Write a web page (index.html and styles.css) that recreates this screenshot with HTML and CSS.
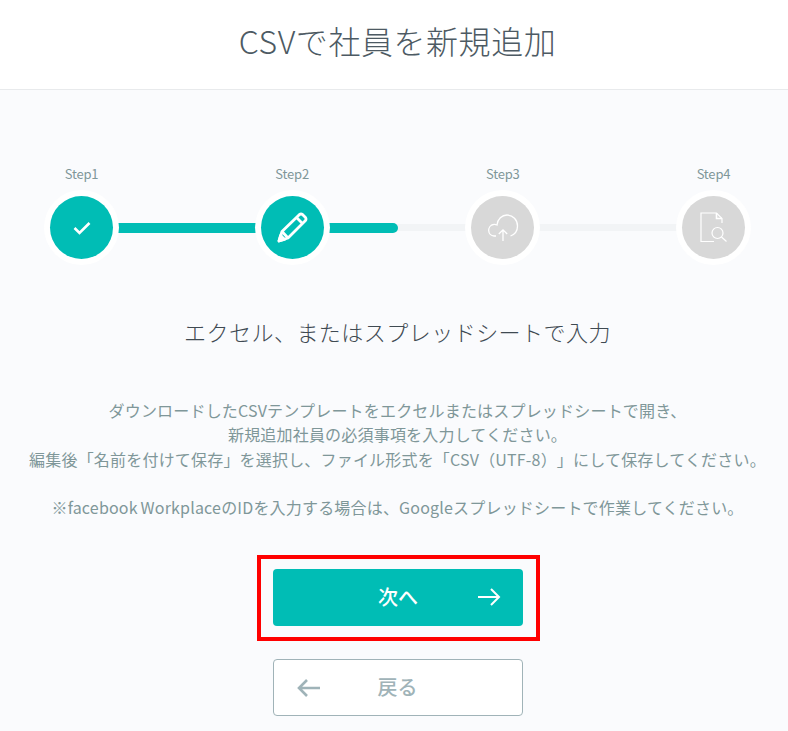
FILE: index.html
```html
<!DOCTYPE html>
<html lang="ja">
<head>
    <meta charset="UTF-8">
    <meta name="viewport" content="width=device-width, initial-scale=1.0">
    <title>CSVで社員を新規追加</title>
    <link rel="stylesheet" href="styles.css">
</head>
<body>
<header class="header">
    <h1>CSVで社員を新規追加</h1>
</header>
<main class="content">

    <div class="stepper">
        <div class="track"><div class="track-done"></div></div>

        <div class="step">
            <div class="step-label">Step1</div>
            <div class="step-ring"><div class="step-circle active">
                <svg width="18" height="14" viewBox="0 0 18 14" fill="none" stroke="#fff" stroke-width="2.6"><path d="M1.5 7 L6.5 12 L16.5 2"/></svg>
            </div></div>
        </div>

        <div class="step">
            <div class="step-label">Step2</div>
            <div class="step-ring"><div class="step-circle active">
                <svg width="32" height="32" viewBox="0 0 32 32" fill="none" stroke="#fff" stroke-width="2.8" stroke-linejoin="round"><path d="M3 29 L6 19.5 L23.5 2.5 Q25 1.5 26.5 2.5 L29.5 5.5 Q30.5 7 29.5 8.5 L12 26 Z"/><path d="M6 19.5 L12 26 M20.5 5.5 L26.5 11.5"/><path d="M3 29 L4.6 23.5 L8.5 27.5 Z" fill="#fff"/></svg>
            </div></div>
        </div>

        <div class="step">
            <div class="step-label">Step3</div>
            <div class="step-ring"><div class="step-circle">
                <svg width="32" height="28" viewBox="0 0 32 28" fill="none" stroke="#fff" stroke-width="1.3"><path d="M9 22 H7 A5.8 5.8 0 0 1 6.500 10.500 C8 10 9 10.500 10 11 C10.500 5 15 1 20 1 C26 1 30.500 6 30.500 12 C30.500 17 27.500 20.500 23.500 22"/><path d="M16 27 V16 M11.800 20 L16 15.800 L20.200 20"/></svg>
            </div></div>
        </div>

        <div class="step">
            <div class="step-label">Step4</div>
            <div class="step-ring"><div class="step-circle">
                <svg width="28" height="32" viewBox="0 0 28 32" fill="none" stroke="#fff" stroke-width="1.2"><path d="M23 11 V6.500 L17.500 1 H2 V29.500 H15"/><path d="M17.500 1 V6.500 H23" stroke-width="1.6"/><circle cx="18.500" cy="21" r="5.500"/><path d="M22.500 25 L27.500 29.500"/></svg>
            </div></div>
        </div>
    </div>

    <h2 class="subtitle">エクセル、またはスプレッドシートで入力</h2>

    <div class="description">
        <p>ダウンロードしたCSVテンプレートをエクセルまたはスプレッドシートで開き、<br>
        新規追加社員の必須事項を入力してください。<br>
        編集後「名前を付けて保存」を選択し、ファイル形式を「CSV（UTF-8）」にして保存してください。</p>
        <p>※facebook WorkplaceのIDを入力する場合は、Googleスプレッドシートで作業してください。</p>
    </div>

    <div class="next-highlight">
        <button class="btn btn-next">次へ
            <svg class="btn-icon icon-right" width="24" height="20" viewBox="0 0 24 20" fill="none" stroke="#fff" stroke-width="2"><path d="M1 10 H22 M14 2 L22 10 L14 18"/></svg>
        </button>
    </div>

    <button class="btn btn-back">
        <svg class="btn-icon icon-left" width="24" height="20" viewBox="0 0 24 20" fill="none" stroke="#9fb3b8" stroke-width="2.600"><path d="M23 10 H2 M10 2 L2 10 L10 18"/></svg>
        戻る
    </button>

</main>
</body>
</html>
```

FILE: styles.css
```css
html, body {
    margin: 0;
    height: 731px;
    overflow: hidden;
    font-family: "Noto Sans CJK JP", "Noto Sans", sans-serif;
    color: #7f9799;
    background-color: #fafbfd;
    text-spacing-trim: space-all;
}

.header {
    height: 89px;
    background-color: #fff;
    border-bottom: 1px solid #e8eaec;
    padding-left: 7px;
    display: flex;
    align-items: center;
    justify-content: center;
}

.header h1 {
    margin: 0 0 9px;
    font-size: 32px;
    font-weight: 300;
    letter-spacing: 0.55px;
    color: #4d5a63;
}

.content {
    display: flex;
    flex-direction: column;
    align-items: center;
    padding-left: 7px;
    padding-top: 74px;
}

.stepper {
    position: relative;
    width: 707px;
    display: flex;
    justify-content: space-between;
}

.track {
    position: absolute;
    left: 37px;
    right: 37px;
    top: 60px;
    height: 7px;
    background-color: #f2f4f6;
}

.track-done {
    position: absolute;
    left: 0;
    top: -1.500px;
    width: 317px;
    height: 10px;
    border-radius: 0 5px 5px 0;
    background-color: #00bdb5;
}

.step {
    position: relative;
    width: 75px;
    display: flex;
    flex-direction: column;
    align-items: center;
}

.step-label {
    height: 26px;
    font-size: 13px;
    font-weight: 400;
    letter-spacing: -0.2px;
    line-height: 20px;
    color: #7f9799;
}

.step-ring {
    width: 75px;
    height: 75px;
    box-sizing: border-box;
    padding: 6px;
    border-radius: 50%;
    background-color: #fff;
}

.step-circle {
    width: 63px;
    height: 63px;
    border-radius: 50%;
    background-color: #d8d8d8;
    display: flex;
    align-items: center;
    justify-content: center;
}

.step-circle.active {
    background-color: #00bdb5;
}

.subtitle {
    margin: 51px 0 0;
    font-size: 22px;
    font-weight: 300;
    letter-spacing: 0.47px;
    line-height: 30px;
    color: #3f4a52;
}

.description {
    margin-top: 52px;
    text-align: center;
    font-size: 16px;
    font-weight: 400;
    letter-spacing: 0.19px;
    word-spacing: -1px;
    line-height: 24.3px;
    white-space: nowrap;
    color: #7f9799;
}

.description p {
    margin: 0 0 24.3px;
}

.next-highlight {
    margin-top: 11px;
    margin-left: 2px;
    padding: 10px 13px 11px 12px;
    border: 4px solid #f00;
}

.btn {
    position: relative;
    display: block;
    width: 250px;
    height: 57px;
    box-sizing: border-box;
    padding-bottom: 3px;
    border-radius: 4px;
    font-family: inherit;
    font-size: 20px;
    font-weight: 500;
}

.btn-next {
    color: #fff;
    border: none;
    background-color: #00bdb5;
}

.btn-back {
    margin-top: 18px;
    color: #a0b3b8;
    border: 1px solid #a0b3b8;
    background-color: #fff;
}

.btn-icon {
    position: absolute;
    top: 18px;
}

.icon-right {
    right: 22px;
}

.icon-left {
    left: 23px;
}
```
